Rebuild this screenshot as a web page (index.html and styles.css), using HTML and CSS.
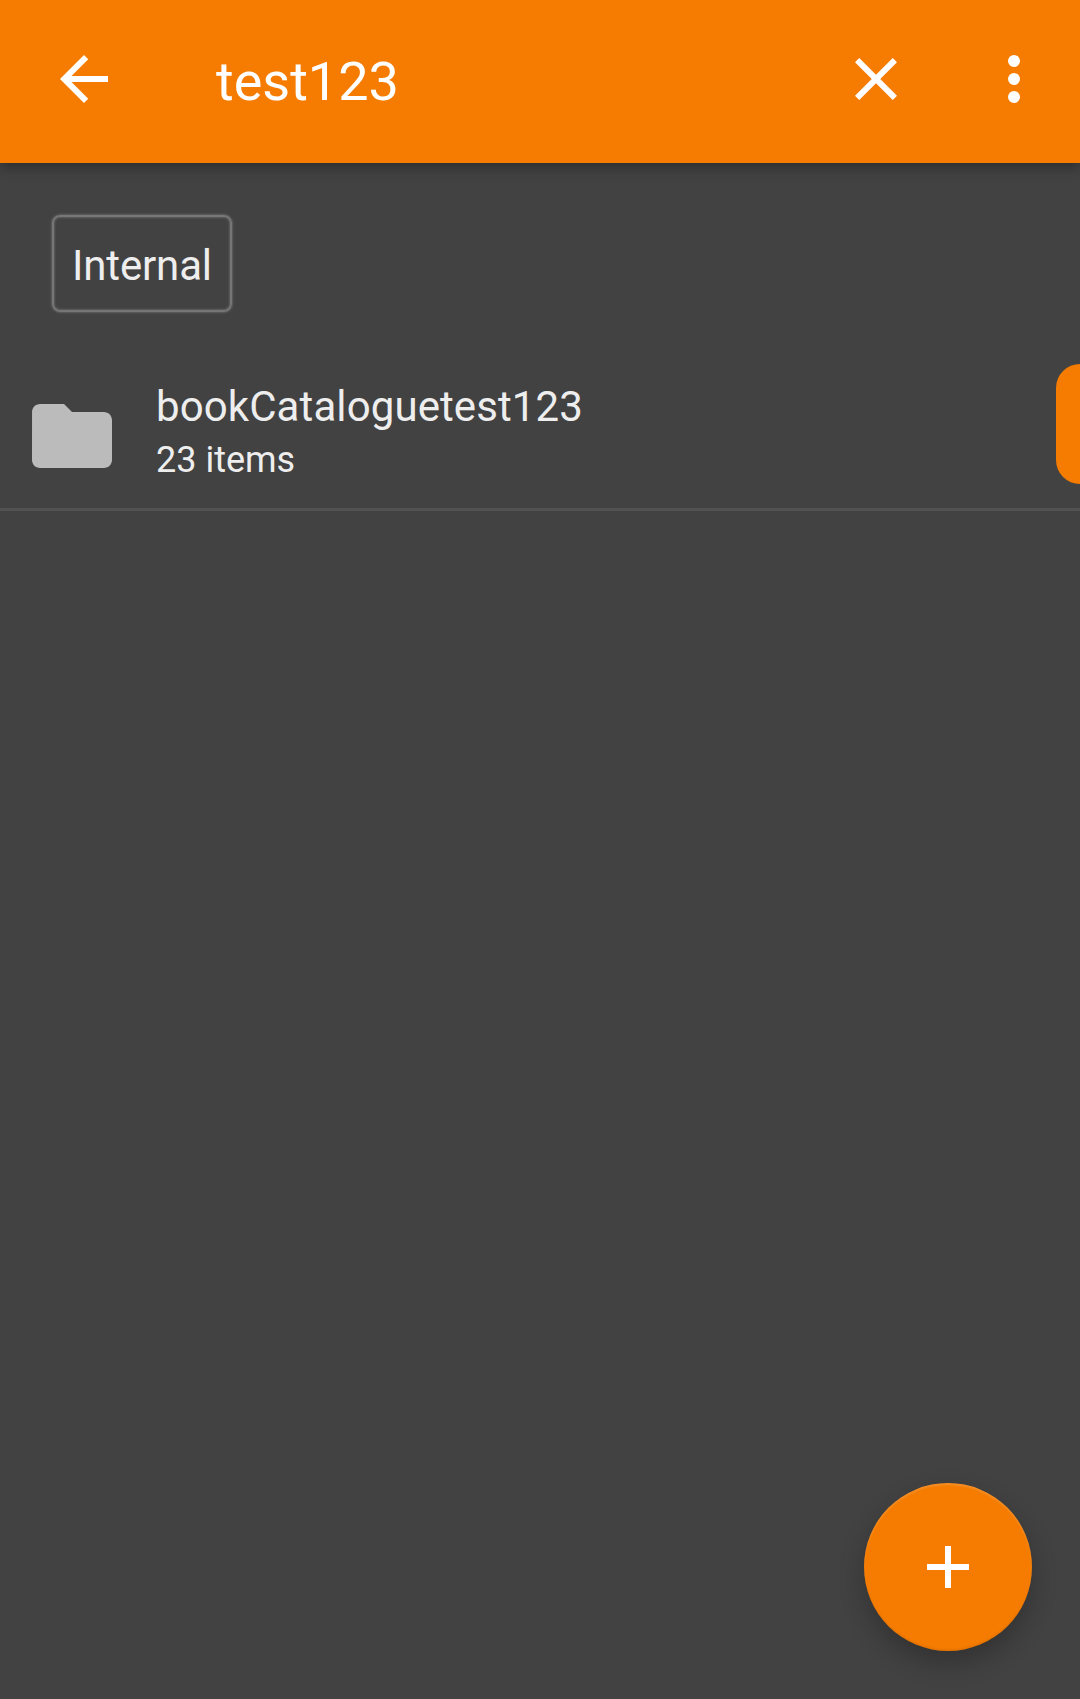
FILE: index.html
```html
<!DOCTYPE html>
<html lang="en">
<head>
<meta charset="utf-8">
<title>test123</title>
<link rel="stylesheet" href="styles.css">
</head>
<body>
<div class="screen">
  <header class="toolbar">
    <svg class="icon" viewBox="0 0 24 24"><path d="M20 11H7.83l5.59-5.59L12 4l-8 8 8 8 1.41-1.41L7.83 13H20v-2z"/></svg>
    <div class="query">test123</div>
    <svg class="icon" viewBox="0 0 24 24"><path d="M19 6.41L17.59 5 12 10.59 6.41 5 5 6.41 10.59 12 5 17.59 6.41 19 12 13.41 17.59 19 19 17.59 13.41 12z"/></svg>
    <svg class="icon menu" viewBox="0 0 24 24"><circle cx="12" cy="6" r="2"/><circle cx="12" cy="12" r="2"/><circle cx="12" cy="18" r="2"/></svg>
  </header>
  <main class="content">
    <nav class="breadcrumbs"><span class="crumb">Internal</span></nav>
    <div class="item">
      <svg class="folder" viewBox="0 0 24 24"><path d="M10 4H4c-1.1 0-1.99.9-1.99 2L2 18c0 1.1.9 2 2 2h16c1.1 0 2-.9 2-2V8c0-1.1-.9-2-2-2h-8l-2-2z"/></svg>
      <div class="details">
        <div class="name">bookCataloguetest123</div>
        <div class="count">23 items</div>
      </div>
    </div>
    <div class="scroll-thumb"></div>
  </main>
  <div class="fab"><svg class="icon" viewBox="0 0 24 24"><path d="M19 13h-6v6h-2v-6H5v-2h6V5h2v6h6v2z"/></svg></div>
</div>
</body>
</html>
```
FILE: styles.css
```css
* { box-sizing: border-box; }

body {
  margin: 0;
  background: #424242;
  color: #eee;
  font-family: Roboto, sans-serif;
}

.screen {
  position: relative;
  display: flex;
  flex-direction: column;
  height: 1699px;
  overflow: hidden;
}

.toolbar {
  display: flex;
  align-items: flex-start;
  height: 163px;
  padding: 43px 30px 0 48px;
  background: #f57c00;
  color: #fff;
  box-shadow: 0 4px 12px rgba(0, 0, 0, .34);
}

.icon {
  flex: none;
  width: 72px;
  height: 72px;
  fill: #fff;
}

.menu { margin-left: 66px; }

.query {
  flex: 1;
  padding: 7px 0 0 96px;
  font-size: 54px;
  line-height: 64px;
}

.content { position: relative; flex: 1; }

.breadcrumbs {
  display: flex;
  height: 201px;
  padding: 52px 0 0 52px;
}

.crumb {
  width: 180px;
  height: 97px;
  padding: 24px 0 0 18px;
  border: 2px solid #767676;
  border-radius: 8px;
  box-shadow: 0 0 2px 1px rgba(140, 140, 140, .4), inset 0 0 2px 1px rgba(140, 140, 140, .4);
  font-size: 42px;
  line-height: 50px;
  letter-spacing: -.15px;
}

.item {
  display: flex;
  height: 147px;
  padding: 18px 0 0 24px;
  border-bottom: 3px solid #525252;
}

.folder {
  width: 96px;
  height: 96px;
  margin-top: 6px;
  fill: #bbb;
}

.details { padding-left: 36px; }

.name {
  font-size: 42px;
  line-height: 50px;
  letter-spacing: .1px;
}

.count {
  font-size: 36px;
  line-height: 56px;
}

.scroll-thumb {
  position: absolute;
  top: 201px;
  right: 0;
  width: 24px;
  height: 120px;
  border-radius: 24px 0 0 24px;
  background: #f57c00;
}

.fab {
  position: absolute;
  right: 48px;
  bottom: 48px;
  display: grid;
  place-items: center;
  width: 168px;
  height: 168px;
  border-radius: 50%;
  background: #f57c00;
  box-shadow: 0 12px 26px rgba(0, 0, 0, .24), inset 0 2px 2px rgba(255, 255, 255, .15), inset 0 -2px 2px rgba(0, 0, 0, .06);
}
```
